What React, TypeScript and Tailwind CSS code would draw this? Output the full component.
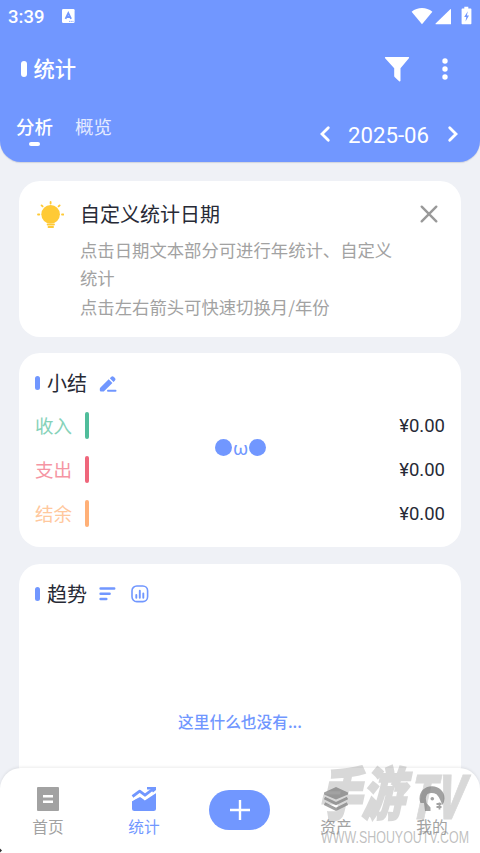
import type { ReactNode } from 'react'
import clsx from 'clsx'

const SUMMARY = [
  { label: '收入', amount: '¥0.00', text: 'text-[#86d2b9]', bar: 'bg-[#50bd9b]' },
  { label: '支出', amount: '¥0.00', text: 'text-[#f595a3]', bar: 'bg-[#ef667b]' },
  { label: '结余', amount: '¥0.00', text: 'text-[#ffc89d]', bar: 'bg-[#ffb077]' },
]

function StatusBar() {
  return (
    <div className="flex h-8 items-center pl-2 pr-[8px] pt-0.5">
      <span className="font-[Roboto] text-[18.5px] font-medium leading-5">3:39</span>
      <svg className="ml-[18px] mt-[-2px]" width="13" height="14" viewBox="0 0 13 14">
        <rect width="12.6" height="14" rx="1.2" fill="#fff" />
        <path d="M3.5 9.8 6.3 4l2.8 5.8M4.5 8h3.6" fill="none" stroke="#7197ff" strokeWidth="1.8" />
        <path d="M7 12.4h4.5" stroke="#7197ff" strokeWidth=".8" strokeDasharray="1.2 .5" />
      </svg>
      <div className="ml-auto mt-[-3px] flex items-center">
        <svg width="22" height="18" viewBox="0 0 22 18" fill="#fff">
          <path d="M.6 4.7C6.8-.1 15.2-.1 21.4 4.7L11 17.3Z" />
        </svg>
        <svg className="ml-[2px]" width="17" height="18" viewBox="0 0 17 18" fill="#fff">
          <path d="M16 2.2v15H.8Q.2 17.2.6 16.6L15.3 2.2Q16 1.6 16 2.2Z" />
        </svg>
        <svg className="ml-[9px]" width="11" height="19" viewBox="0 0 11 19">
          <path d="M3.3.8h4v1.8h2.4q.7 0 .7.7v14.2q0 .7-.7.7H1.3q-.7 0-.7-.7V3.3q0-.7.7-.7h2Z" fill="#fff" />
          <path d="M6.8 5.2 3.2 11h2.1l-.8 4.4L8 9.5H5.9Z" fill="#7197ff" />
        </svg>
      </div>
    </div>
  )
}

function Header() {
  return (
    <header className="flex h-[162px] flex-col rounded-b-[21px] bg-[#7197ff] text-white shadow-[0_1px_1px_rgba(90,100,130,0.2)]">
      <StatusBar />
      <div className="flex h-[74px] items-center pl-[21px] pr-8">
        <span className="h-4 w-[6px] rounded-full bg-white" />
        <h1 className="ml-[6.5px] mt-[-2px] text-[21.3px] font-medium leading-8">统计</h1>
        <svg className="ml-auto" width="26" height="26" viewBox="0 0 26 26" fill="#fff">
          <path d="M1.6 1h22.8q1.3.1.5 1.3L16.5 12.3v12.5q-.4 1.2-1.4.5l-4.5-4.2q-.4-.4-.4-1V12.3L1.1 2.3Q.4 1.1 1.6 1Z" />
        </svg>
        <svg className="ml-[32px]" width="6" height="22" viewBox="0 0 6 22" fill="#fff">
          <circle cx="3" cy="3" r="2.7" />
          <circle cx="3" cy="11" r="2.7" />
          <circle cx="3" cy="19" r="2.7" />
        </svg>
      </div>
      <div className="flex items-start pl-4 pr-[21px]">
        <div className="mt-[6px] flex flex-col items-center">
          <span className="text-[18.5px] font-medium leading-7">分析</span>
          <span className="mt-[2px] h-1 w-[11px] rounded-full bg-white" />
        </div>
        <span className="ml-[22px] mt-[6px] text-[18.5px] leading-7 text-[#e3eaff]">概览</span>
        <div className="ml-auto mt-[15px] flex items-center">
          <Chevron d="M9.3 2.8 3 9l6.3 6.200" />
          <span className="ml-[17px] mr-[18px] font-[Roboto] text-[22.2px] leading-7">2025-06</span>
          <Chevron d="M2.7 2.8 9 9l-6.3 6.2" />
        </div>
      </div>
    </header>
  )
}

function Chevron({ d }: { d: string }) {
  return (
    <svg className="mt-[-2px]" width="12" height="18" viewBox="0 0 12 18" fill="none" stroke="#fff" strokeWidth="2.8" strokeLinecap="round">
      <path d={d} />
    </svg>
  )
}

function TipCard() {
  return (
    <section className="flex h-[156px] rounded-[21px] bg-white pl-[18px] pr-[23px] pt-[17px]">
      <svg className="mt-[2px] shrink-0" width="27" height="28" viewBox="0 0 27 28">
        <circle cx="13.6" cy="14.3" r="9.3" fill="#ffca36" />
        <path
          d="M13.6 2v1.5M4.600 5.4l1 1M22.6 5.4l-1 1M1 14.5h1.3M25 14.5h1.3M10.6 24.5h6.4M11.5 27h4.6"
          fill="none"
          stroke="#ffca36"
          strokeWidth="1.8"
          strokeLinecap="round"
        />
      </svg>
      <div className="ml-4 w-[320px]">
        <h2 className="text-[20px] leading-8 text-[#272a36]">自定义统计日期</h2>
        <p className="mt-[6px] text-[17.35px] leading-[28.4px] text-[#a2a2a2]">
          点击日期文本部分可进行年统计、自定义统计
          <br />
          点击左右箭头可快速切换月/年份
        </p>
      </div>
      <svg className="ml-auto mt-[7px]" width="18" height="18" viewBox="0 0 18 18" fill="none" stroke="#999" strokeWidth="2.4" strokeLinecap="round">
        <path d="m1.7 1.7 14.6 14.6M16.3 1.7 1.7 16.3" />
      </svg>
    </section>
  )
}

function CardTitle({ title, children }: { title: string; children: ReactNode }) {
  return (
    <div className="flex h-8 items-center">
      <span className="h-[14px] w-[5px] rounded-full bg-[#7197ff]" />
      <h2 className="ml-[7px] mr-[12px] text-[20px] leading-8 text-[#272a36]">{title}</h2>
      {children}
    </div>
  )
}

function SummaryCard() {
  return (
    <section className="relative h-[194px] rounded-[21px] bg-white px-4 pt-[14px]">
      <CardTitle title="小结">
        <svg className="mt-[2px]" width="18" height="18" viewBox="0 0 18 18">
          <path d="M1.2 12.8 9.7 4.3l3.7 3.7-8.600 8.4H2q-1.2 0-1.2-1.2v-1.4ZM10.8 3.2l1.5-1.5q1.2-1.1 2.3 0l1.4 1.4q1.1 1.2 0 2.3l-1.5 1.5Z" fill="#7197ff" />
          <path d="M9 15.7h7.5" stroke="#7197ff" strokeWidth="2" strokeLinecap="round" />
        </svg>
      </CardTitle>
      <div className="mt-[4px]">
        {SUMMARY.map((row) => (
          <div key={row.label} className="flex h-11 items-center">
            <span className={clsx('w-[50px] text-[18.5px] leading-7', row.text)}>{row.label}</span>
            <span className={clsx('h-[27px] w-[4px] rounded-full', row.bar)} />
            <span className="ml-auto pt-0.5 font-[Roboto] text-[18.5px] leading-7 text-[#272a36]">{row.amount}</span>
          </div>
        ))}
      </div>
      <div className="absolute left-[196px] top-[83px] flex h-[22px] items-center text-[#7197ff]">
        <span className="size-[17px] rounded-full bg-[#7197ff]" />
        <span className="w-[17px] pt-[3px] text-center font-[Roboto] text-[18.5px] leading-5">ω</span>
        <span className="size-[17px] rounded-full bg-[#7197ff]" />
      </div>
    </section>
  )
}

function TrendCard() {
  return (
    <section className="mt-px h-[260px] rounded-t-[21px] bg-white px-4 pt-[14px]">
      <CardTitle title="趋势">
        <svg width="17" height="14" viewBox="0 0 17 14" stroke="#7197ff" strokeWidth="2.5" strokeLinecap="round">
          <path d="M1.6 1.6h13.6M1.6 6.8h9M1.6 12h5.7" />
        </svg>
        <svg className="ml-[15px]" width="18" height="18" viewBox="0 0 18 18" fill="none" stroke="#7197ff" strokeLinecap="round">
          <rect x="1" y="1" width="15.6" height="15.6" rx="4.8" strokeWidth="1.6" />
          <path d="M5.3 10v2.7M8.8 5.8v6.9M12.3 8.4v4.3" strokeWidth="1.9" />
        </svg>
      </CardTitle>
      <p className="mt-[98px] text-center text-[15.7px] font-medium leading-7 text-[#7197ff]">这里什么也没有...</p>
    </section>
  )
}

function NavItem({ label, active, children }: { label: string; active?: boolean; children: ReactNode }) {
  return (
    <div className={clsx('flex w-24 flex-col items-center', active ? 'text-[#7197ff]' : 'text-[#a2a2a2]')}>
      <svg width="26" height="26" viewBox="0 0 26 26" fill="currentColor">
        {children}
      </svg>
      <span className="mt-[3px] text-[15.7px] leading-6">{label}</span>
    </div>
  )
}

function BottomNav() {
  return (
    <nav className="absolute bottom-0 left-0 flex h-[85px] w-full overflow-hidden rounded-t-[21px] bg-white pt-[18px] shadow-[0_-1px_3px_rgba(0,0,0,0.08)]">
      <NavItem label="首页">
        <rect x="2" y="1" width="22" height="24" rx="1" />
        <path d="M8 10.3h10M8 15.7h10" stroke="#fff" strokeWidth="2.4" />
      </NavItem>
      <NavItem label="统计" active>
        <path d="M1 15v7.5Q1 25 3.5 25h19q2.5 0 2.5-2.5V5.5L14 14l-5-3Z" />
        <path d="m0 13.5 9-6 5 4.5L25.5 4.5" fill="none" stroke="#fff" strokeWidth="4" />
        <path d="m1.500 10.500 7.200-5.300 5.300 4L22 3" fill="none" stroke="currentColor" strokeWidth="2.8" strokeLinejoin="round" />
        <path d="M16 1h9v3l-3 2.5-2-3h-4Z" />
      </NavItem>
      <div className="flex w-24 justify-center pr-px pt-[4px]">
        <span className="flex h-10 w-[61px] items-center justify-center rounded-full bg-[#7197ff]">
          <svg width="20" height="20" viewBox="0 0 20 20" stroke="#fff" strokeWidth="2.4">
            <path d="M0 10h20M10 0v20" />
          </svg>
        </span>
      </div>
      <NavItem label="资产">
        <path d="M13 1 25 6.5v2L13 13.5 1 8.5v-2Z" />
        <path d="m1.5 12 11.5 5.5L24.5 12M1.5 17.7 13 23.3l11.5-5.6" fill="none" stroke="currentColor" strokeWidth="3" />
      </NavItem>
      <NavItem label="我的">
        <path d="M1.5 17Q.5 15 .5 12.500C.5 5 6 .3 13 .3s12.500 5 12.500 12.200Q25.500 16 23.500 19 22 16 21 13.500T17.500 8.300Q13 6 8.500 8 7 9.500 6.800 12.500L7.500 17l4 4.500V25H6L5 17Z" />
        <circle cx="13.3" cy="12.7" r="1.8" />
        <path d="M17.5 18h5M17.5 21h5M20.5 16.5v7" stroke="currentColor" strokeWidth="1.8" />
      </NavItem>
      <span className="absolute -left-1 bottom-0 size-[5px] rotate-45 bg-[#333]" />
    </nav>
  )
}

function Watermark() {
  return (
    <div className="pointer-events-none absolute bottom-0 left-[312px] h-[95px] w-[168px]">
      <svg width="168" height="95" viewBox="0 0 168 95">
        <g fontWeight="900" transform="translate(8 58) skewX(-12)" fill="#828282" stroke="#828282" opacity=".3">
          <text x="-2" y="-1.5" fontSize="57" fontFamily="Noto Sans CJK SC" textLength="86" lengthAdjust="spacingAndGlyphs" strokeWidth="2">
            手游
          </text>
          <text x="88" y="3" fontSize="62" fontFamily="Roboto" textLength="54" lengthAdjust="spacingAndGlyphs" strokeWidth="1">
            TV
          </text>
        </g>
        <text x="9" y="84.5" fontSize="16.5" fontFamily="Liberation Sans" textLength="148" lengthAdjust="spacingAndGlyphs" fill="#8a8a8a" fillOpacity=".55">
          WWW.SHOUYOUTV.COM
        </text>
      </svg>
    </div>
  )
}

export default function App() {
  return (
    <div className="relative h-[853px] w-[480px] overflow-hidden bg-[#eff1f6] font-['Noto_Sans_CJK_SC',sans-serif]">
      <Header />
      <main className="flex flex-col gap-4 px-[19px] pt-[19px]">
        <TipCard />
        <SummaryCard />
        <TrendCard />
      </main>
      <BottomNav />
      <Watermark />
    </div>
  )
}
